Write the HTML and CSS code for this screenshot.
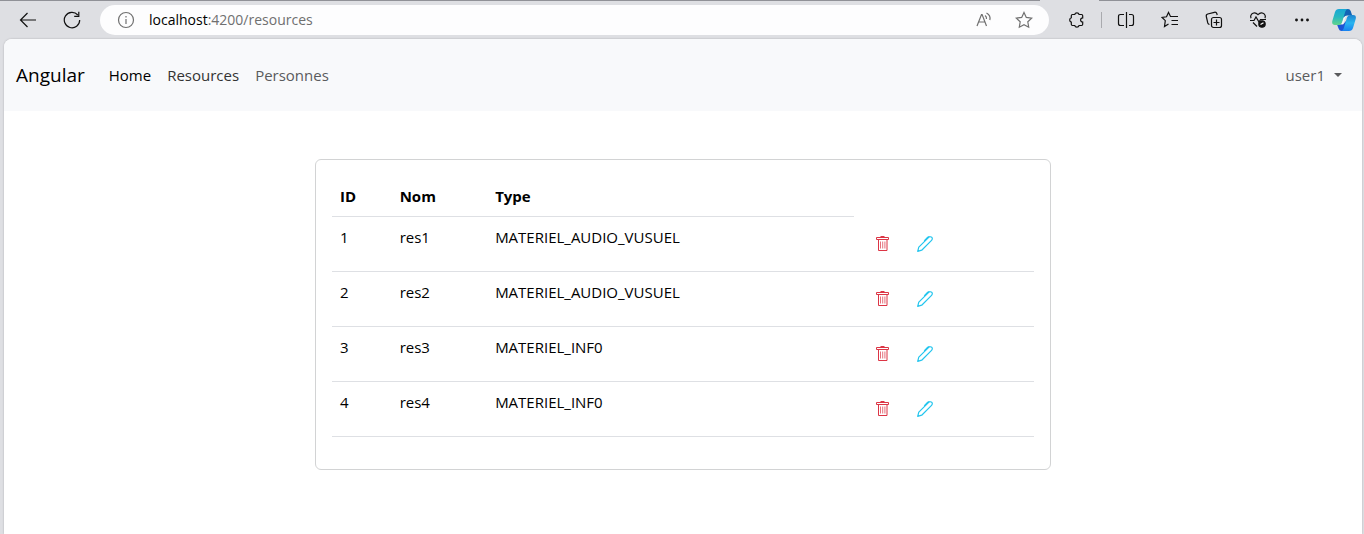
FILE: index.html
```html
<!DOCTYPE html>
<html lang="fr">
<head>
<meta charset="utf-8">
<meta name="viewport" content="width=device-width, initial-scale=1">
<title>Resources</title>
<link rel="stylesheet" href="styles.css">
</head>
<body>
<svg class="defs" aria-hidden="true">
  <symbol id="trash" viewBox="0 0 16 16"><g fill="none" stroke="currentColor"><path d="M1.500 1.500h12v2h-12zM5.500.5h4M3.500 4v10.500h8.500V4"/><path stroke-opacity=".7" d="M5.500 5.500v7M7.700 5.500v7M9.900 5.500v7"/></g></symbol>
  <symbol id="pencil" viewBox="0 0 16 16"><g fill="none" stroke="currentColor" stroke-width="1.200" stroke-linejoin="round"><path d="M.7 15.300l1.100-4.100L11.200 1.800q1.100-1.200 2.600-1 1.700.2 1.500 2-.1 1-1 1.900L4.700 14.200zM7.200 4.800L10.500 1.500q.9-.9 2-.9"/></g></symbol>
</svg>
<header class="toolbar">
  <div class="nav-buttons">
    <button class="tool" aria-label="Back"><svg width="18" height="18" viewBox="0 0 18 18"><path d="M17 9H1.500M8.500 2L1.500 9l7 7"/></svg></button>
    <button class="tool" aria-label="Refresh"><svg width="18" height="18" viewBox="0 0 18 18"><path d="M16.700 9A7.700 7.700 0 1 1 14.800 4M15.800.7v4.600h-4.600"/></svg></button>
  </div>
  <div class="address">
    <button class="tool muted" aria-label="Site information"><svg width="18" height="18" viewBox="0 0 18 18"><circle cx="9" cy="9" r="7.500"/><path d="M9 8v5M9 5v1.500"/></svg></button>
    <div class="url"><span class="host">localhost</span>:4200/resources</div>
    <div class="address-actions">
      <button class="tool muted" aria-label="Read aloud"><svg width="18" height="18" viewBox="0 0 18 18"><path d="M2 15L6.500 3.500h.6L11.500 15M3.500 11h6.500M10 4.500q1.800 1.200 1.500 3.500M11.500 2q4.500 2.500 3.300 7"/></svg></button>
      <button class="tool muted" aria-label="Add to favorites"><svg width="18" height="18" viewBox="0 0 18 18"><path d="M9 1.500l2.300 4.900 5.400.7-3.900 3.700.9 5.400L9 13.600l-4.700 2.600.9-5.400-3.900-3.700 5.400-.7z"/></svg></button>
    </div>
  </div>
  <div class="extensions">
    <button class="tool" aria-label="Extensions"><svg width="18" height="18" viewBox="0 0 18 18"><path d="M4.500 3.500h2.200a2.300 2.300 0 0 1 4.400 0h2.400q1.200 0 1.200 1.200v2.200a2.100 2.100 0 1 0 0 4.200v2.200q0 1.200-1.200 1.200h-2.400a2.300 2.300 0 0 1-4.400 0H4.500q-1.200 0-1.200-1.200v-2.200a2.300 2.300 0 0 1 0-4.400V4.700q0-1.200 1.200-1.200z"/></svg></button>
    <span class="divider"></span>
    <button class="tool" aria-label="Split screen"><svg width="18" height="18" viewBox="0 0 18 18"><path d="M7 3.500H3.500q-2 0-2 2v7q0 2 2 2H7M9.500 1v16M12 3.500h2.500q2 0 2 2v7q0 2-2 2H12"/></svg></button>
  </div>
  <div class="tools">
    <button class="tool" aria-label="Favorites"><svg width="18" height="18" viewBox="0 0 18 18"><path d="M10.500 5.500h-1L7.500 1.500l-2 4.300-4.400.6 3.200 3.200-.8 5.900 4-2.500M10.500 5.500h6.500M10.500 9.500h6.500M10.500 13.500h6.500"/></svg></button>
    <button class="tool" aria-label="Collections"><svg width="18" height="18" viewBox="0 0 18 18"><rect x="6.500" y="6.500" width="10" height="10" rx="2"/><path d="M8.500 11.500h6M11.500 8.500v6M4.500 13.500q-1.300-.2-1.700-1.500L1.300 5.500q-.4-2 1.400-2.500l6.600-1.700q2-.4 2.600 1.500l.3 1.200"/></svg></button>
    <button class="tool" aria-label="Browser essentials"><svg width="18" height="18" viewBox="0 0 18 18"><path d="M2 7.200Q1 5 2.600 3.200 5.500.2 9 3.700q3.500-3.500 6.400-.5Q17 5 16 7.200M1 9.500h4l2-3.500 3 5 1.500-2.500H17M4 11.500l4 4"/><circle class="solid" cx="13" cy="13" r="3.200"/><path class="light" d="M11.500 13.500l3-1.800"/></svg></button>
    <button class="tool" aria-label="Settings and more"><svg width="18" height="18" viewBox="0 0 18 18"><g class="solid"><circle cx="3.500" cy="9" r=".8"/><circle cx="9" cy="9" r=".8"/><circle cx="14.500" cy="9" r=".8"/></g></svg></button>
  </div>
  <button class="tool copilot" aria-label="Copilot"><svg width="24" height="24" viewBox="0 0 24 24">
    <defs>
      <linearGradient id="left" x1="0" y1="0" x2="0" y2="1"><stop offset="0" stop-color="#18a7d5"/><stop offset=".5" stop-color="#28b8c0"/><stop offset="1" stop-color="#62d48b"/></linearGradient>
      <linearGradient id="right" x1="0" y1="0" x2="0" y2="1"><stop offset="0" stop-color="#1c83cf"/><stop offset=".5" stop-color="#29b5ef"/><stop offset="1" stop-color="#1681f1"/></linearGradient>
    </defs>
    <path fill="#1264b5" d="M12 1h4q2 0 2.700 2l1.500 4.500H15q-2 0-2.600 2L9 9z"/>
    <path fill="#1b55d6" d="M5 16.500h6l3-3.500 3 3-2.200 5q-.7 2-2.800 2H9.500q-2 0-2.700-2z"/>
    <path fill="url(#left)" d="M7 1h9q-2 .2-2.700 2.500L10 14.500Q9.200 17 6.800 17H3q-3.500 0-2.700-4L3 4q.9-3 4-3z"/>
    <path fill="url(#right)" d="M17 23H9q2-.3 2.700-2.500L15 9.500q.7-2.500 3.200-2.500H21q3.700 0 2.700 4L21 20q-.9 3-4 3z"/>
    <path fill="#f4fbff" d="M14.500 8q-1.300 1-1.800 3l-1.500 5H9.500q.7-.8 1-2l1.200-4q.6-2 2.800-2z"/>
  </svg></button>
</header>
<div class="page">
  <nav class="navbar">
    <a class="brand" href="#">Angular</a>
    <div class="links">
      <a class="active" href="#">Home</a>
      <a class="hover" href="#">Resources</a>
      <a href="#">Personnes</a>
    </div>
    <button class="user">user1<span class="caret"></span></button>
  </nav>
  <main class="card">
    <table class="resources">
      <colgroup><col class="col-id"><col class="col-name"><col class="col-type"><col></colgroup>
      <thead>
        <tr><th scope="col">ID</th><th scope="col">Nom</th><th scope="col">Type</th></tr>
      </thead>
      <tbody>
        <tr><td>1</td><td>res1</td><td>MATERIEL_AUDIO_VUSUEL</td><td><div class="actions"><button class="btn delete" aria-label="Delete res1"><svg><use href="#trash"/></svg></button><button class="btn edit" aria-label="Edit res1"><svg><use href="#pencil"/></svg></button></div></td></tr>
        <tr><td>2</td><td>res2</td><td>MATERIEL_AUDIO_VUSUEL</td><td><div class="actions"><button class="btn delete" aria-label="Delete res2"><svg><use href="#trash"/></svg></button><button class="btn edit" aria-label="Edit res2"><svg><use href="#pencil"/></svg></button></div></td></tr>
        <tr><td>3</td><td>res3</td><td>MATERIEL_INF0</td><td><div class="actions"><button class="btn delete" aria-label="Delete res3"><svg><use href="#trash"/></svg></button><button class="btn edit" aria-label="Edit res3"><svg><use href="#pencil"/></svg></button></div></td></tr>
        <tr><td>4</td><td>res4</td><td>MATERIEL_INF0</td><td><div class="actions"><button class="btn delete" aria-label="Delete res4"><svg><use href="#trash"/></svg></button><button class="btn edit" aria-label="Edit res4"><svg><use href="#pencil"/></svg></button></div></td></tr>
      </tbody>
    </table>
  </main>
</div>
</body>
</html>
```
FILE: styles.css
```css
* { box-sizing: border-box; }

body {
  margin: 0;
  min-height: 100vh;
  display: flex;
  flex-direction: column;
  background: #dedfe3;
  color: #000;
  font: 15px/24px "Open Sans", "Noto Sans", sans-serif;
}

a { color: inherit; text-decoration: none; }

button {
  margin: 0;
  padding: 0;
  border: 0;
  background: none;
  color: inherit;
  font: inherit;
}

.defs { display: none; }

/* Browser toolbar; the top line breaks below the active tab */
.toolbar {
  display: flex;
  align-items: center;
  height: 39px;
  padding: 1px 8px 0 19px;
  background:
    linear-gradient(#909197, #909197) left top / calc(100% - 324px) 1px no-repeat,
    linear-gradient(#909197, #909197) right top / 265px 1px no-repeat;
}

.tool {
  display: flex;
  flex: none;
  color: #111;
}

.tool svg {
  fill: none;
  stroke: currentColor;
  stroke-width: 1.2;
}

.tool .solid { fill: currentColor; }
.tool .light { stroke: #fff; }
.tool.muted { color: #707070; }
.tool.copilot svg { stroke: none; }

.nav-buttons { display: flex; gap: 26px; }

.address {
  display: flex;
  flex: 1;
  align-items: center;
  height: 30px;
  margin-left: 19px;
  padding: 0 16px 0 17px;
  border-radius: 15px;
  background: #fdfdfe;
}

.url {
  flex: 1;
  margin-left: 14px;
  color: #6f6f70;
  font-size: 14px;
}

.host { color: #000; }

.address-actions { display: flex; gap: 22px; }

.extensions {
  display: flex;
  align-items: center;
  gap: 15px;
  margin-left: 19px;
}

.divider {
  width: 1px;
  height: 16px;
  background: #a9aaae;
}

.tools {
  display: flex;
  gap: 26px;
  margin: 0 21px 0 26px;
}

/* Application */
.page {
  flex: 1;
  margin: 0 2px 0 4px;
  overflow: hidden;
  border-radius: 8px 8px 0 0;
  background: #fff;
  box-shadow: 0 0 2px #a8a9ad;
}

.navbar {
  display: flex;
  align-items: center;
  padding: 16px 20px 16px 12px;
  background: #f8f9fb;
}

.brand {
  font-size: 19px;
  line-height: 40px;
}

.links {
  display: flex;
  flex: 1;
  gap: 16px;
  margin-left: 24px;
  color: #5a5b5d;
}

.active { color: #000; }
.hover { color: #333; }

.user {
  display: flex;
  align-items: center;
  gap: 9px;
  color: #5a5b5d;
}

.caret {
  border: 4px solid transparent;
  border-top-color: currentColor;
  border-bottom: 0;
}

.card {
  width: 54.2%;
  margin: 48px auto;
  padding: 16px;
  border: 1px solid #d2d3d4;
  border-radius: 6px;
}

.resources {
  width: 100%;
  margin-bottom: 16px;
  table-layout: fixed;
  border-spacing: 0;
}

.col-id { width: 8.5%; }
.col-name { width: 13.6%; }
.col-type { width: 52.2%; }

.resources th,
.resources td {
  padding: 8px;
  border-bottom: 1px solid #dee0e4;
  text-align: left;
  vertical-align: top;
}

.actions { display: flex; }

.btn {
  display: flex;
  padding: 11px 13px;
}

.btn svg {
  width: 16px;
  height: 16px;
}

.delete { color: #dc3545; }
.edit { color: #22c5ee; }
```
